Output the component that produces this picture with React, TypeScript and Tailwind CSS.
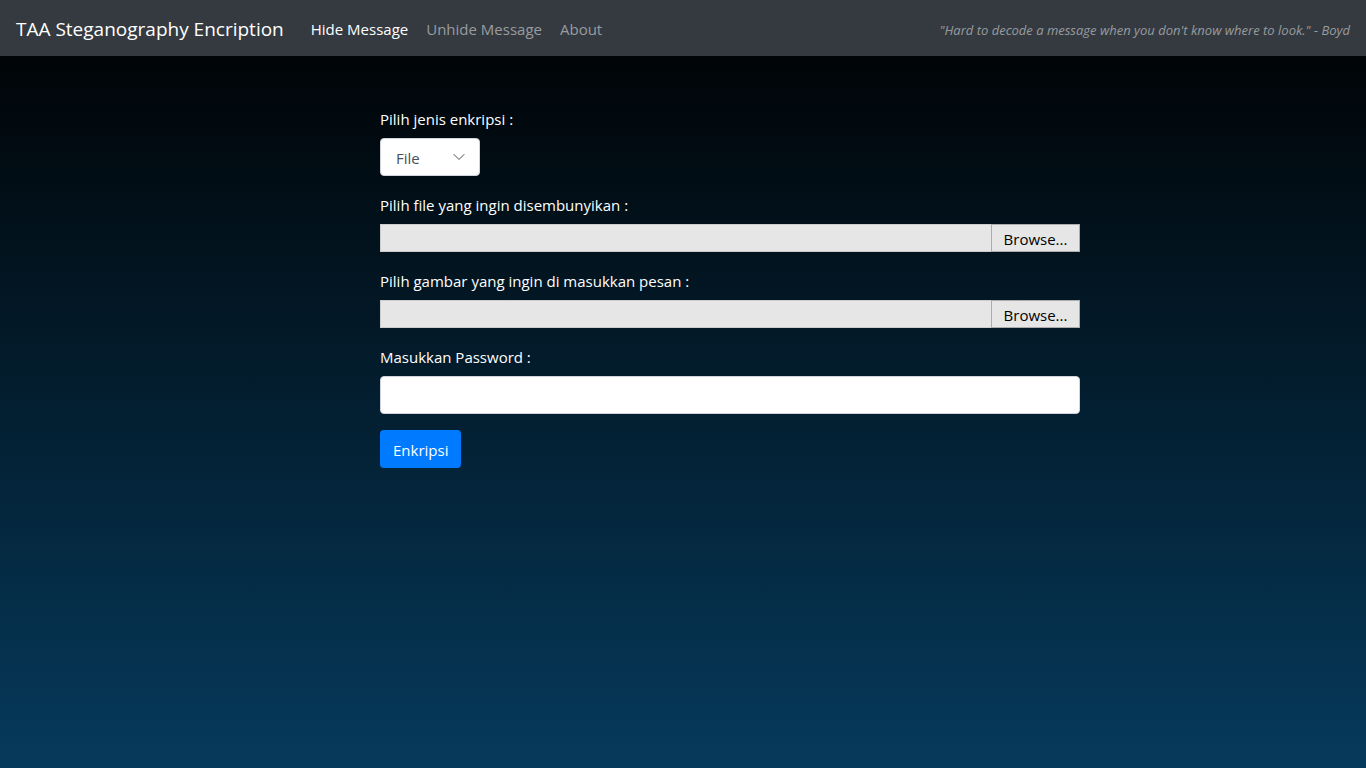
import { useState } from 'react'
import type { FormEvent, ReactNode } from 'react'

const links = ['Hide Message', 'Unhide Message', 'About']

function Field({ id, label, children }: { id: string; label: string; children: ReactNode }) {
  return (
    <div className="flex flex-col items-start gap-2">
      <label htmlFor={id} className="pt-0.5 leading-[22px]">{label}</label>
      {children}
    </div>
  )
}

function FilePicker({ id }: { id: string }) {
  const [name, setName] = useState('')
  return (
    <div className="relative flex h-7 w-full bg-[#e6e6e6] text-black focus-within:outline-2 focus-within:outline-blue-400">
      <span className="min-w-0 flex-1 truncate border border-r-0 border-[#cccccc] px-2">{name}</span>
      <span className="flex w-[89px] items-center justify-center border border-[#acacac] pt-0.5">Browse...</span>
      <input
        id={id}
        type="file"
        className="absolute inset-0 h-full w-full cursor-pointer opacity-0"
        onChange={(e) => setName(e.target.files?.[0]?.name ?? '')}
      />
    </div>
  )
}

export default function App() {
  const [active, setActive] = useState(links[0])
  const submit = (e: FormEvent) => e.preventDefault()

  return (
    <div className="flex min-h-screen flex-col bg-[linear-gradient(to_bottom,#000000,#063a5c)] font-['Segoe_UI','Open_Sans',sans-serif] text-[15px] leading-6 text-white">
      <nav className="flex min-h-14 flex-wrap items-center bg-[#343a40] px-4 pt-0.5">
        <a href="#" className="mr-[27px] text-[19px] leading-8">TAA Steganography Encription</a>
        <ul className="flex gap-[18px]">
          {links.map((item) => (
            <li key={item}>
              <a
                href="#"
                aria-current={item === active ? 'page' : undefined}
                onClick={() => setActive(item)}
                className={item === active ? 'text-white' : 'text-[#999c9f]'}
              >
                {item}
              </a>
            </li>
          ))}
        </ul>
        <p className="ml-auto pt-0.5 text-[13px] text-[#999c9f] italic">
          "Hard to decode a message when you don't know where to look." - Boyd
        </p>
      </nav>

      <main className="mx-auto w-full max-w-[794px] pt-[50px] pl-[94px]">
        <form onSubmit={submit} className="flex flex-col items-stretch gap-4">
          <Field id="kind" label="Pilih jenis enkripsi :">
            <div className="relative">
              <select
                id="kind"
                className="h-[38px] w-[100px] appearance-none rounded-sm border border-[#ced4da] bg-white pt-0.5 pr-7 pl-[15px] text-[#495057]"
              >
                <option>File</option>
                <option>Text</option>
              </select>
              <svg
                viewBox="0 0 12 8"
                className="pointer-events-none absolute top-[15px] right-[15px] h-2 w-3"
                fill="none"
                stroke="#495057"
                aria-hidden="true"
              >
                <path d="M.7 1.2 6 6.5l5.3-5.3" />
              </svg>
            </div>
          </Field>
          <Field id="file" label="Pilih file yang ingin disembunyikan :">
            <FilePicker id="file" />
          </Field>
          <Field id="image" label="Pilih gambar yang ingin di masukkan pesan :">
            <FilePicker id="image" />
          </Field>
          <Field id="password" label="Masukkan Password :">
            <input
              id="password"
              type="password"
              className="h-[38px] w-full rounded-sm border border-[#ced4da] bg-white px-3 text-[#495057]"
            />
          </Field>
          <button type="submit" className="h-[38px] self-start rounded-sm bg-[#007bff] px-[13px] pt-0.5">
            Enkripsi
          </button>
        </form>
      </main>
    </div>
  )
}
